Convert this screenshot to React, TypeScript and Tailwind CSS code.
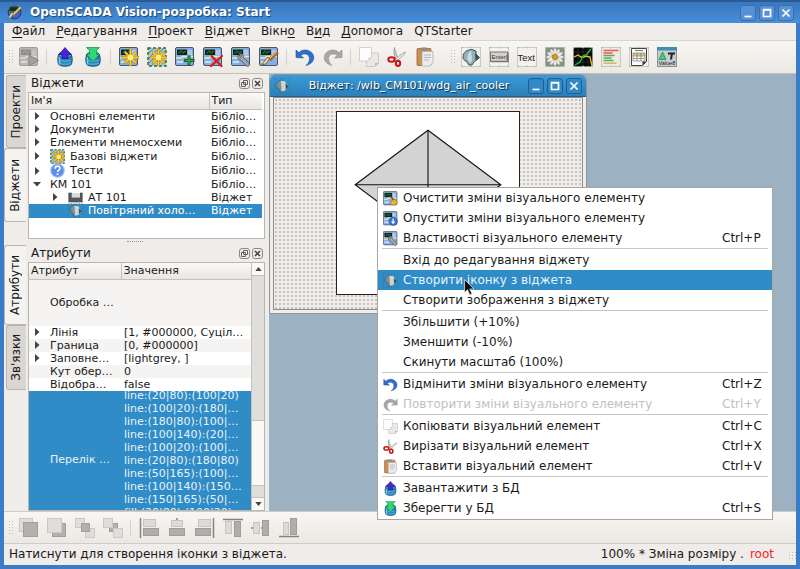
import type { ReactNode } from 'react';
import clsx from 'clsx';

type IconProps = { className?: string };

const Svg = ({ className = 'size-5', children }: { className?: string; children: ReactNode }) => (
  <svg viewBox="0 0 20 20" className={clsx('block shrink-0', className)} aria-hidden="true">
    {children}
  </svg>
);

/* ---------- icon parts ---------- */

// small SCADA screen used as the base of the widget icons
const Screen = ({ gray = false }: { gray?: boolean }) => (
  <g>
    <rect x="0.5" y="0.5" width="18" height="18" rx="1.5" fill={gray ? '#b9b7b5' : '#86aee6'} stroke={gray ? '#a09e9c' : '#4b5666'} />
    <rect x="2" y="2.5" width="10" height="5.5" fill={gray ? '#8f8d8b' : '#10240f'} />
    <path d="M3 6h2V4h2v2h2V4.500h2" fill="none" stroke={gray ? '#a8a6a4' : '#2f8a2f'} strokeWidth="0.8" />
    <path d="M1 11h5l2-1.500h10" fill="none" stroke={gray ? '#dcdad8' : '#e9edb5'} strokeWidth="1.6" />
    <path d="M2 15h6" stroke={gray ? '#dcdad8' : '#c9dcf5'} strokeWidth="2" />
    <path d="M14 3v5M16 3v5" stroke={gray ? '#d0cecc' : '#d5e4f8'} strokeWidth="1" />
  </g>
);

const Star = () => (
  <g>
    <path d="M11.500 3v15M4 10.500h15M6.300 5.300l10.400 10.400M16.700 5.300L6.300 15.700" stroke="#a06c00" strokeWidth="2.6" strokeLinecap="round" />
    <path d="M11.500 3v15M4 10.500h15M6.300 5.300l10.400 10.400M16.700 5.300L6.300 15.700" stroke="#ffc926" strokeWidth="1.9" strokeLinecap="round" />
    <circle cx="11.500" cy="10.500" r="2.800" fill="#fff08a" />
  </g>
);

const DottedFrame = ({ fill = '#f4f2ef' }: { fill?: string }) => (
  <g>
    <rect x="0.5" y="0.5" width="19" height="19" fill={fill} stroke="#a5a29e" strokeDasharray="1 1" />
    <path d="M0 .5h2M18 .5h2M0 19.500h2M18 19.500h2M9 .5h2M9 19.500h2" stroke="#7fe27f" strokeWidth="1.4" />
  </g>
);

const Database = () => (
  <g>
    <path d="M3.500 8C2.500 11 2.500 14 3.500 17c1 3 12 3 13 0 1-3 1-6 0-9z" fill="#2787bd" stroke="#174a72" strokeWidth="0.9" />
    <path d="M4.500 9v8.500" stroke="#7fd4ee" strokeWidth="1.400" />
    <path d="M4 13c1.500 1.600 10.500 1.600 12 0M4 16c1.500 1.600 10.500 1.600 12 0" fill="none" stroke="#5fbfe2" strokeWidth="0.900" />
    <ellipse cx="10" cy="8" rx="6.500" ry="3.200" fill="#4aa5d0" stroke="#174a72" strokeWidth="0.8" />
  </g>
);

/* ---------- icons ---------- */

const RunIcon = (p: IconProps) => (
  <Svg {...p}>
    <Screen gray />
    <path d="M10 8l9.500 5.500L10 19z" fill="#a3a19f" stroke="#8a8886" />
  </Svg>
);

const DbLoadIcon = (p: IconProps) => (
  <Svg {...p}>
    <Database />
    <path d="M10 .5l6 7h-3v4H7v-4H4z" fill="#4a25d8" stroke="#241080" strokeWidth="0.7" />
  </Svg>
);

const DbSaveIcon = (p: IconProps) => (
  <Svg {...p}>
    <Database />
    <path d="M3.500 .5h13l-3 3v4h3L10 14.500l-6.500-7h3v-4z" fill="#2fd873" stroke="#138a45" strokeWidth="0.7" />
  </Svg>
);

const NewWidgetIcon = (p: IconProps) => (
  <Svg {...p}><Screen /><Star /></Svg>
);

const LibraryIcon = (p: IconProps) => (
  <Svg {...p}>
    <rect x="1" y="1" width="18" height="18" fill="#a9c3c9" stroke="#2e6b3a" strokeWidth="1.500" strokeDasharray="3 2" />
    <path d="M2 6l4-4M2 11l9-9M2 16L16 2M5 18L18 5" stroke="#5e7f84" strokeWidth="0.900" />
    <Star />
  </Svg>
);

const AddIcon = (p: IconProps) => (
  <Svg {...p}>
    <Screen />
    <path d="M14 8.500v10M9 13.500h10.500" stroke="#15602a" strokeWidth="3" />
    <path d="M14 9.500v8M10 13.500h8.500" stroke="#2fb352" strokeWidth="1.200" />
  </Svg>
);

const DeleteIcon = (p: IconProps) => (
  <Svg {...p}>
    <Screen />
    <path d="M8.500 9l10 10M19 9L8 19" stroke="#e01818" strokeWidth="2.200" strokeLinecap="round" />
  </Svg>
);

const WrenchIcon = (p: IconProps) => (
  <Svg {...p}>
    <Screen />
    <path d="M8 7.500c-2 1.500-1.500 5 1.500 5.500l6 6c1.500 1.200 4-1 2.800-2.600l-5.800-5.800c.5-3-2-4.600-4-3.800l2 2.200-1 1.500z" fill="#a4a8ae" stroke="#4d5158" strokeWidth="0.900" />
  </Svg>
);

const EditIcon = (p: IconProps) => (
  <Svg {...p}>
    <Screen />
    <path d="M18.500 5l-8 8" stroke="#a36a2f" strokeWidth="3.500" />
    <path d="M18 4l-8 8" stroke="#e2b57d" strokeWidth="1.200" />
    <path d="M11 11l-4 6-4 .5 5-7z" fill="#f0d59c" stroke="#5a4220" strokeWidth="0.700" />
  </Svg>
);

const ClearIcon = (p: IconProps) => (
  <Svg {...p}>
    <Screen />
    <path d="M10 7l5 6" stroke="#7a4a12" strokeWidth="2" />
    <path d="M11 13l5-2 3.500 5-5 3-5-2z" fill="#f0b52d" stroke="#996a10" strokeWidth="0.700" />
  </Svg>
);

const LowerIcon = (p: IconProps) => (
  <Svg {...p}>
    <Screen />
    <circle cx="13.500" cy="13.500" r="5.500" fill="#3b73d8" stroke="#1c3f94" strokeWidth="0.800" />
    <path d="M13.500 10v5.500M11.500 14l2 2.500 2-2.500" fill="none" stroke="#fff" strokeWidth="1.600" />
  </Svg>
);

const undoPath = 'M1 3v7.500l7.500.5-2.600-2.600C9 5.500 14.500 7 14.500 11.500c0 2.500-1 5-3.500 7C17 17 19.500 13 18.500 9 17.300 3.500 9 .5 3.800 5.600z';

const UndoIcon = (p: IconProps) => (
  <Svg {...p}><path d={undoPath} fill="#2e6fd0" stroke="#1f4c98" strokeWidth="0.600" /></Svg>
);

const RedoIcon = (p: IconProps) => (
  <Svg {...p}><g transform="translate(20 0) scale(-1 1)"><path d={undoPath} fill="#a9a7a4" stroke="#8f8d8a" strokeWidth="0.600" /></g></Svg>
);

const CopyIcon = (p: IconProps) => (
  <Svg {...p}>
    <path d="M7.500 6h12v10l-3.500 3.500H7.500z" fill="#e9e9e9" stroke="#c2c0be" strokeWidth="0.800" />
    <path d="M19.500 16l-3.500 3.500V16z" fill="#bcbab8" />
    <path d="M.5 .5h12v10L9.500 14h-9z" fill="#fdfdfd" stroke="#c9c7c5" strokeWidth="0.800" />
    <path d="M12.500 10.500L9.500 14v-3.500z" fill="#cfcdcb" />
  </Svg>
);

const CutIcon = (p: IconProps) => (
  <Svg {...p}>
    <path d="M7.500 .5c1 4 2 8 4 11.500l-2 1C7 9.500 6.300 4 7.500 .5z" fill="#c9cccd" stroke="#7c7f80" strokeWidth="0.600" />
    <path d="M18.500 5c-4 2-7.500 4.500-10 7.500l1.200 1C13.500 11 17 8.500 18.500 5z" fill="#eceeee" stroke="#7c7f80" strokeWidth="0.600" />
    <ellipse cx="4.500" cy="12.500" rx="3.200" ry="2.200" fill="none" stroke="#c81414" strokeWidth="2" />
    <ellipse cx="11" cy="16.300" rx="2.200" ry="2.600" fill="none" stroke="#c81414" strokeWidth="2" />
  </Svg>
);

const PasteIcon = (p: IconProps) => (
  <Svg {...p}>
    <rect x="2" y="1.500" width="14" height="17" rx="1" fill="#c9904e" stroke="#94642c" strokeWidth="0.800" />
    <rect x="5.500" y=".5" width="7" height="3" rx="1" fill="#8c8c8c" />
    <path d="M7 4.500h11v11l-3 3.500H7z" fill="#e9ebec" stroke="#aaa" strokeWidth="0.700" />
    <path d="M9 8h7M9 10.500h7M9 13h5" stroke="#b4b8ba" strokeWidth="1" />
  </Svg>
);

const ElFigureIcon = (p: IconProps) => (
  <Svg {...p}>
    <DottedFrame />
    <path d="M11 2.500C6 2.500 2 5.500 2 10c0 2 1 3.500 3 4l3 4h3l2-3 5.500-4.500L15 7V4z" fill="#8fb0b5" stroke="#3e555c" strokeWidth="1" />
    <path d="M10 3.500C7 6 6 9 6.500 13l3.500 3 1-4z" fill="#c9dde0" />
    <path d="M14 6l4.500 4.500-4 3.500z" fill="#3c5358" />
  </Svg>
);

const CoolerIcon = (p: IconProps) => (
  <Svg {...p}>
    <rect x=".5" y=".5" width="19" height="19" fill="none" stroke="#2d7a7a" strokeDasharray="1.500 2" />
    <path d="M8.500 2.500C4 4 2 7 3 11l2.500 2L8 18l3-1V3z" fill="#74909a" stroke="#34505c" strokeWidth="0.800" />
    <path d="M8.500 3.500l5 .5L18 10.500l-4.500 5.500-4 1z" fill="#ccd6d4" />
    <path d="M14.500 6.500l4 4-4 4z" fill="#3f5054" />
  </Svg>
);

const FormIcon = (p: IconProps) => (
  <Svg {...p}>
    <DottedFrame />
    <rect x="1.500" y="5" width="17" height="9.500" fill="#d4d2cf" stroke="#77756f" />
    <path d="M2 14.500h17V6" stroke="#77756f" strokeWidth="1.500" fill="none" />
    <text x="2.500" y="12" fontSize="6" fontFamily="Liberation Sans, sans-serif" fill="#333">Enter|</text>
  </Svg>
);

const TextIcon = (p: IconProps) => (
  <Svg {...p}>
    <DottedFrame />
    <text x="0.500" y="13.500" fontSize="9.500" fontFamily="Liberation Sans, sans-serif" fill="#222">Text</text>
  </Svg>
);

const MediaIcon = (p: IconProps) => (
  <Svg {...p}>
    <DottedFrame fill="#8a9087" />
    {[0, 30, 60, 90, 120, 150].map((a) => (
      <ellipse key={a} cx="10" cy="10" rx="9" ry="2.200" fill="#ecece9" stroke="#9a9d96" strokeWidth="0.400" transform={`rotate(${a} 10 10)`} />
    ))}
    <circle cx="10" cy="10" r="2.800" fill="#d89c14" stroke="#9c6c05" strokeWidth="0.600" />
  </Svg>
);

const DiagramIcon = (p: IconProps) => (
  <Svg {...p}>
    <DottedFrame fill="#050505" />
    <path d="M1 5h18M1 10h18M1 15h18M5 1v18M10 1v18M15 1v18" stroke="#333" strokeWidth="0.600" />
    <path d="M1 10l4-2 3 2h3l2-1 4 1 2 9" fill="none" stroke="#e2c81c" strokeWidth="1.300" />
    <path d="M2 18l5-3 3-6 4-2 4-5" fill="none" stroke="#28c43c" strokeWidth="1.300" />
  </Svg>
);

const ProtocolIcon = (p: IconProps) => (
  <Svg {...p}>
    <DottedFrame fill="#efe9df" />
    <path d="M2.500 3.500h15M2.500 6h9" stroke="#e55b4f" strokeWidth="1.500" />
    <path d="M2.500 8.500h11M2.500 11h8M2.500 13.500h10" stroke="#4fb060" strokeWidth="1.500" />
    <path d="M2.500 16.200h13" stroke="#cdb765" strokeWidth="1.500" />
  </Svg>
);

const DocumentIcon = (p: IconProps) => (
  <Svg {...p}>
    <DottedFrame />
    <path d="M2.500 1.500h15v13l-4 4h-11z" fill="#fafafa" stroke="#444" />
    <path d="M17.500 14.500l-4 4v-4z" fill="#333" />
    <path d="M6 3.500h8" stroke="#777" strokeWidth="1" />
    <path d="M4 7.500h12" stroke="#e2c55c" strokeWidth="2.500" />
    <path d="M4 6h12v8H4zM4 9h12M4 11.500h12M8 6v8M12 6v8" fill="none" stroke="#777" strokeWidth="0.700" />
  </Svg>
);

const ValueIcon = (p: IconProps) => (
  <Svg {...p}>
    <rect x=".5" y=".5" width="19" height="19" fill="#c6cdd0" stroke="#8a9296" />
    <rect x="0" y="0" width="20" height="3.500" fill="#3f8fb5" />
    <path d="M5.500 5l3.500 7.500H2z" fill="#3fcf7a" stroke="#1c7f45" strokeWidth="0.700" />
    <path d="M11 5.500h7v2h-2.200l-.8 5h-2l.8-5H11z" fill="#222" />
    <text x="1.500" y="18" fontSize="5.500" fontFamily="Liberation Sans, sans-serif" fill="#222">Value8</text>
  </Svg>
);

const HelpIcon = (p: IconProps) => (
  <Svg {...p}>
    <circle cx="10" cy="10" r="9" fill="#5d8ff0" stroke="#a9c2f5" strokeWidth="1.500" />
    <path d="M6.800 7.500c0-4.500 6.500-4.200 6.500-.5 0 2.400-3.200 2.500-3.200 5" fill="none" stroke="#fff" strokeWidth="2.200" />
    <circle cx="10.100" cy="15" r="1.400" fill="#fff" />
  </Svg>
);

const TankIcon = (p: IconProps) => (
  <Svg {...p}>
    <path d="M1 4h4v6h11V4h3v12H1z" fill="#55585c" stroke="#3a3c3f" strokeWidth="0.800" />
    <path d="M5 4h11v6H5z" fill="#d9dbdd" />
  </Svg>
);

const VisionIcon = (p: IconProps) => (
  <Svg {...p}>
    <circle cx="10" cy="10" r="8.500" fill="#4a5fc0" stroke="#2a2f4e" strokeWidth="1.200" />
    <rect x="3" y="2.500" width="13" height="6" fill="#173216" stroke="#6b7a55" strokeWidth="0.700" />
    <path d="M18 3L8 13" stroke="#e6c64f" strokeWidth="2.500" />
    <path d="M9 11l-4 6-4 1 5-8z" fill="#eddfae" stroke="#5a4220" strokeWidth="0.700" />
  </Svg>
);

// layer order icons: [x, y, size, dark]
const layer = (boxes: [number, number, number, boolean][]) => (p: IconProps) => (
  <Svg {...p}>
    {boxes.map(([x, y, s, dark], i) => (
      <rect key={i} x={x} y={y} width={s} height={s} fill={dark ? '#b3b1ae' : '#e0deda'} stroke={dark ? '#a19f9c' : '#cbc9c6'} />
    ))}
  </Svg>
);

const RaiseIcon = layer([[0.5, 0.5, 13, false], [4.5, 4.5, 14, true]]);
const LowerLevelIcon = layer([[5.5, 5.5, 13, true], [0.5, 0.5, 14, false]]);
const UpIcon = layer([[0.5, 0.5, 9, false], [10.5, 10.5, 9, false], [6.5, 5.5, 8, true]]);
const DownIcon = layer([[6.5, 5.5, 8, true], [0.5, 0.5, 9, false], [10.5, 10.5, 9, false]]);

// two bars plus the line they are aligned to
const align = (a: number[], b: number[], line: string, dash = false) => (p: IconProps) => (
  <Svg {...p}>
    <path d={line} stroke="#85837f" strokeWidth="1.500" strokeDasharray={dash ? '2 3' : undefined} />
    <rect x={a[0]} y={a[1]} width={a[2]} height={a[3]} fill="#dddbd7" stroke="#c6c4c1" />
    <rect x={b[0]} y={b[1]} width={b[2]} height={b[3]} fill="#b0aeab" stroke="#9f9d9a" />
  </Svg>
);

const AlignLeftIcon = align([4.5, 1.5, 12, 7], [4.5, 10.5, 15, 7], 'M1.500 0v20');
const AlignCenterIcon = align([4.5, 2.5, 11, 6], [2.5, 10.5, 15, 7], 'M10 0v20', true);
const AlignRightIcon = align([3.5, 1.5, 12, 7], [0.5, 10.5, 15, 7], 'M18.500 0v20');
const AlignTopIcon = align([2.5, 3.5, 6, 12], [11.5, 3.5, 6, 15], 'M0 1.500h20');
const AlignMiddleIcon = align([2.5, 4.5, 6, 11], [11.5, 2.5, 6, 15], 'M0 10h20', true);
const AlignBottomIcon = align([4.5, 4.5, 5, 12], [11.5, 0.5, 6, 16], 'M0 18.500h20');

/* ---------- data ---------- */

const menus = [
  ['', 'Ф', 'айл'],
  ['', 'Р', 'едагування'],
  ['', 'П', 'роект'],
  ['', 'В', 'іджет'],
  ['Вікн', 'о', ''],
  ['В', 'и', 'д'],
  ['', 'Д', 'опомога'],
  ['QTStarter', '', ''],
];

type Tool = { icon: (p: IconProps) => ReactNode; label: string };

const toolGroups: Tool[][] = [
  [{ icon: RunIcon, label: 'Виконати' }],
  [
    { icon: DbLoadIcon, label: 'Завантажити з БД' },
    { icon: DbSaveIcon, label: 'Зберегти у БД' },
  ],
  [
    { icon: NewWidgetIcon, label: 'Новий проект' },
    { icon: LibraryIcon, label: 'Нова бібліотека' },
    { icon: AddIcon, label: 'Додати' },
    { icon: DeleteIcon, label: 'Видалити' },
    { icon: WrenchIcon, label: 'Властивості' },
    { icon: EditIcon, label: 'Редагувати' },
  ],
  [
    { icon: UndoIcon, label: 'Відмінити' },
    { icon: RedoIcon, label: 'Повторити' },
  ],
  [
    { icon: CopyIcon, label: 'Копіювати' },
    { icon: CutIcon, label: 'Вирізати' },
    { icon: PasteIcon, label: 'Вставити' },
  ],
];

const primitiveTools: Tool[] = [
  { icon: ElFigureIcon, label: 'Елементарна фігура' },
  { icon: FormIcon, label: 'Елемент форми' },
  { icon: TextIcon, label: 'Текст' },
  { icon: MediaIcon, label: 'Медіа' },
  { icon: DiagramIcon, label: 'Діаграма' },
  { icon: ProtocolIcon, label: 'Протокол' },
  { icon: DocumentIcon, label: 'Документ' },
  { icon: ValueIcon, label: 'Значення' },
];

const levelTools: Tool[][] = [
  [
    { icon: RaiseIcon, label: 'Підняти наверх' },
    { icon: LowerLevelIcon, label: 'Опустити донизу' },
    { icon: UpIcon, label: 'Підняти' },
    { icon: DownIcon, label: 'Опустити' },
  ],
  [
    { icon: AlignLeftIcon, label: 'Вирівняти ліворуч' },
    { icon: AlignCenterIcon, label: 'Вирівняти по центру' },
    { icon: AlignRightIcon, label: 'Вирівняти праворуч' },
    { icon: AlignTopIcon, label: 'Вирівняти вгору' },
    { icon: AlignMiddleIcon, label: 'Вирівняти посередині' },
    { icon: AlignBottomIcon, label: 'Вирівняти вниз' },
  ],
];

const widgets = [
  { name: 'Основні елементи', type: 'Бібліо…', arrow: 'right', h: 'h-[13px]' },
  { name: 'Документи', type: 'Бібліо…', arrow: 'right', h: 'h-[13px]' },
  { name: 'Елементи мнемосхеми', type: 'Бібліо…', arrow: 'right', h: 'h-[13px]' },
  { name: 'Базові віджети', type: 'Бібліо…', arrow: 'right', h: 'h-[15px]', icon: LibraryIcon },
  { name: 'Тести', type: 'Бібліо…', arrow: 'right', h: 'h-[14px]', icon: HelpIcon },
  { name: 'КМ 101', type: 'Бібліо…', arrow: 'down', h: 'h-[13px]' },
  { name: 'АТ 101', type: 'Віджет', arrow: 'right', h: 'h-[13px]', icon: TankIcon, child: true },
  { name: 'Повітряний холо…', type: 'Віджет', h: 'h-[14px]', icon: CoolerIcon, child: true, selected: true },
];

const attributes = [
  { name: 'Обробка …', value: '', tall: true },
  { name: 'Лінія', value: '[1, #000000, Суціл…', arrow: true },
  { name: 'Граница', value: '[0, #000000]', arrow: true },
  { name: 'Заповне…', value: '[lightgrey, ]', arrow: true },
  { name: 'Кут обер…', value: '0' },
  { name: 'Відобра…', value: 'false' },
];

const figureLines = [
  'line:(20|80):(100|20)',
  'line:(100|20):(180|…',
  'line:(180|80):(100|…',
  'line:(100|140):(20|…',
  'line:(100|20):(100|…',
  'line:(20|80):(180|80)',
  'line:(50|165):(100|…',
  'line:(100|140):(150…',
  'line:(150|165):(50|…',
  'fill:(20|80):(100|20)',
];

type MenuItem = { text: string; keys?: string; icon?: (p: IconProps) => ReactNode; active?: boolean; disabled?: boolean };

const contextMenu: MenuItem[][] = [
  [
    { text: 'Очистити зміни візуального елементу', icon: ClearIcon },
    { text: 'Опустити зміни візуального елементу', icon: LowerIcon },
    { text: 'Властивості візуального елементу', icon: WrenchIcon, keys: 'Ctrl+P' },
  ],
  [
    { text: 'Вхід до редагування віджету' },
    { text: 'Створити іконку з віджета', icon: CoolerIcon, active: true },
    { text: 'Створити зображення з віджету' },
  ],
  [{ text: 'Збільшити (+10%)' }, { text: 'Зменшити (-10%)' }, { text: 'Скинути масштаб (100%)' }],
  [
    { text: 'Відмінити зміни візуального елементу', icon: UndoIcon, keys: 'Ctrl+Z' },
    { text: 'Повторити зміни візуального елементу', icon: RedoIcon, keys: 'Ctrl+Y', disabled: true },
  ],
  [
    { text: 'Копіювати візуальний елемент', icon: CopyIcon, keys: 'Ctrl+C' },
    { text: 'Вирізати візуальний елемент', icon: CutIcon, keys: 'Ctrl+X' },
    { text: 'Вставити візуальний елемент', icon: PasteIcon, keys: 'Ctrl+V' },
  ],
  [
    { text: 'Завантажити з БД', icon: DbLoadIcon },
    { text: 'Зберегти у БД', icon: DbSaveIcon, keys: 'Ctrl+S' },
  ],
];

/* ---------- components ---------- */

const WindowButtons = ({ inner = false }: { inner?: boolean }) => (
  <div className="flex gap-[3px]">
    {[
      { label: 'Згорнути', d: 'M4.500 11.500h7' },
      { label: 'Розгорнути', d: 'M4.500 4.500h7v7h-7zM4.500 5h7' },
      { label: 'Закрити', d: 'M4.500 4.500l7 7M11.500 4.500l-7 7' },
    ].map((b) => (
      <button
        key={b.label}
        aria-label={b.label}
        className={clsx('size-4 rounded-[3px] border', inner ? 'border-[#1c5f92] bg-[#3388c6]' : 'border-[#386fae] bg-[#5591d3]')}
      >
        <svg viewBox="1 1 14 14" className="block size-full" aria-hidden="true">
          <path d={b.d} fill="none" stroke="#fff" strokeWidth="1.700" />
        </svg>
      </button>
    ))}
  </div>
);

const ToolButton = ({ icon: Icon, label }: Tool) => (
  <button aria-label={label} className="flex h-7 w-7 items-center justify-center">
    <Icon />
  </button>
);

const Handle = () => (
  <div className="ml-1 mr-px h-4 w-[6px] bg-[radial-gradient(circle,#c3c0bc_1px,transparent_1px)] bg-[length:3px_3px]" />
);

const Separator = () => <div className="ml-[3px] mr-1 h-4 w-px bg-[#d5d2ce]" />;

const Arrow = ({ down = false }: { down?: boolean }) => (
  <svg viewBox="0 0 8 8" className="block size-2 shrink-0" aria-hidden="true">
    <path d={down ? 'M0 2h8L4 6.500z' : 'M2 0v8l4.500-4z'} fill="#444" />
  </svg>
);

const DockTitle = ({ title }: { title: string }) => (
  <div className="flex h-[18px] items-center justify-between pl-[3px] pr-0.5">
    <h2 className="text-[12px]">{title}</h2>
    <div className="flex gap-0.5">
      <button aria-label="Відкріпити" className="size-[11px] rounded-[3px] border border-[#8d8a86]">
        <svg viewBox="0 0 9 9" className="block size-full" aria-hidden="true">
          <path d="M3.500 1.500h4v4h-4zM1.500 3.500h4v4h-4z" fill="none" stroke="#555" strokeWidth="0.900" />
        </svg>
      </button>
      <button aria-label="Закрити" className="size-[11px] rounded-[3px] border border-[#8d8a86]">
        <svg viewBox="0 0 9 9" className="block size-full" aria-hidden="true">
          <path d="M2 2l5 5M7 2L2 7" stroke="#444" strokeWidth="1.600" />
        </svg>
      </button>
    </div>
  </div>
);

const SideTab = ({ label, active = false, h }: { label: string; active?: boolean; h: string }) => (
  <button
    role="tab"
    aria-selected={active}
    className={clsx(
      'flex items-center justify-center rounded-l-[3px] border border-r-0 border-[#bab7b3]',
      h,
      active ? 'w-[22px] bg-[#f5f3f0]' : 'ml-0.5 w-5 bg-[#dad7d3]',
    )}
  >
    <span className="rotate-180 [writing-mode:vertical-rl]">{label}</span>
  </button>
);

const headCell = 'h-4 border-b border-[#c4c1bd] bg-linear-to-b from-[#faf9f8] to-[#e9e6e2] text-left font-normal';

const WidgetTree = () => (
  <div className="flex-1 border border-[#b9b6b2] bg-white pr-0.5">
    <table className="w-full table-fixed border-collapse text-[11px]">
      <thead>
        <tr>
          <th className={clsx(headCell, 'border-r pl-0.5')}>Ім'я</th>
          <th className={clsx(headCell, 'w-[53px] pl-0.5')}>Тип</th>
        </tr>
      </thead>
      <tbody>
        {widgets.map((w) => (
          <tr key={w.name} className={clsx(w.selected && 'bg-[#308cc6] text-white')}>
            <td className="p-0">
              <div className={clsx('flex items-center whitespace-nowrap', w.h, w.child ? 'pl-[22px]' : 'pl-1')}>
                <span className="flex w-[17px] shrink-0">{w.arrow && <Arrow down={w.arrow === 'down'} />}</span>
                {w.icon && <span className="mr-[5px]"><w.icon className="size-[15px]" /></span>}
                {w.name}
              </div>
            </td>
            <td className="whitespace-nowrap p-0 pl-0.5">{w.type}</td>
          </tr>
        ))}
      </tbody>
    </table>
  </div>
);

const AttributeTable = () => (
  <div className="flex h-[249px] overflow-hidden border border-[#b9b6b2]">
    <div className="min-w-0 flex-1 overflow-hidden bg-white">
      <table className="w-full table-fixed border-collapse text-[11px]">
        <thead>
          <tr>
            <th className={clsx(headCell, 'w-[92px] border-r pl-0.5')}>Атрибут</th>
            <th className={clsx(headCell, 'pl-0.5')}>Значення</th>
          </tr>
        </thead>
        <tbody>
          {attributes.map((a) => (
            <tr key={a.name} className="odd:bg-[#f5f4f2]">
              <td className="p-0">
                <div className={clsx('flex items-center whitespace-nowrap pl-1', a.tall ? 'h-[46px]' : 'h-[13px]')}>
                  <span className="flex w-[17px] shrink-0">{a.arrow && <Arrow />}</span>
                  {a.name}
                </div>
              </td>
              <td className="whitespace-nowrap p-0 pl-[3px]">{a.value}</td>
            </tr>
          ))}
          <tr className="bg-[#308cc6] text-[#e8f3fa]">
            <td className="p-0 pl-[21px]">Перелік …</td>
            <td className="p-0 pl-[3px]">
              <div className="flex h-[138px] flex-col justify-center overflow-hidden pb-3">
                {figureLines.map((l) => (
                  <div key={l} className="h-[13px] shrink-0 whitespace-nowrap">{l}</div>
                ))}
              </div>
            </td>
          </tr>
        </tbody>
      </table>
    </div>
    <div className="flex w-[13px] flex-col border-l border-[#c4c1bd] bg-[#e0deda]">
      <button aria-label="Вгору" className="flex h-[13px] items-center justify-center border-b border-[#c4c1bd] bg-[#faf9f8]">
        <svg viewBox="0 0 8 5" className="h-1 w-[7px]" aria-hidden="true"><path d="M0 5h8L4 0z" fill="#444" /></svg>
      </button>
      <div className="flex-1" />
      <div className="h-[66px] border-y border-[#c4c1bd] bg-[#faf9f8]" />
      <div className="h-[11px]" />
      <button aria-label="Вниз" className="flex h-[13px] items-center justify-center border-t border-[#c4c1bd] bg-[#faf9f8]">
        <svg viewBox="0 0 8 5" className="h-1 w-[7px]" aria-hidden="true"><path d="M0 0h8L4 5z" fill="#444" /></svg>
      </button>
    </div>
  </div>
);

const WidgetWindow = () => (
  <section className="absolute left-0 top-0 w-[318px] rounded-t-md border border-[#8e9399] bg-[#efecea]">
    <div className="flex h-[22px] items-center justify-between rounded-t-[5px] border-b border-[#1f618f] bg-linear-to-b from-[#3a9ad8] to-[#2b80b9] px-1">
      <CoolerIcon className="size-4" />
      <h1 className="text-[11px] text-white [text-shadow:1px_1px_1px_#123]">Віджет: /wlb_CM101/wdg_air_cooler</h1>
      <WindowButtons inner />
    </div>
    <div className="mx-[3px] mb-[3px] h-[213px] border border-[#8f8c88] bg-[#efecea] bg-[radial-gradient(circle,#c6c2bd_1px,transparent_1px)] bg-[length:4px_4px] pl-[62px] pt-[13px]">
      <svg viewBox="0 0 200 200" className="block size-[184px] border border-[#222] bg-white" aria-hidden="true">
        <g fill="lightgrey" stroke="#111" strokeWidth="1.200">
          <path d="M20 80L100 20L180 80L100 140z" />
          <path d="M100 20V140M20 80H180" />
          <path d="M50 165L100 140L150 165z" />
        </g>
      </svg>
    </div>
  </section>
);

const ContextMenu = () => (
  <div role="menu" className="absolute left-[373px] top-[187px] w-[396px] border border-[#a9a6a2] bg-white pb-px">
    {contextMenu.map((group, i) => (
      <div key={i}>
        {i > 0 && <div className="mx-1 mb-px h-px bg-[#c9c7c5]" />}
        {group.map((item) => (
          <button
            key={item.text}
            role="menuitem"
            disabled={item.disabled}
            className={clsx(
              'flex h-5 w-full items-center pl-[5px] pr-3 text-[12px]',
              item.active && 'bg-[#308cc6] text-[#e8f3fa]',
              item.disabled && 'text-[#c3c1bf]',
            )}
          >
            <span className="w-5 shrink-0">{item.icon && <item.icon className="size-[15px]" />}</span>
            <span className="flex-1 text-left whitespace-nowrap">{item.text}</span>
            {item.keys && <span className="w-[38px] whitespace-nowrap text-left">{item.keys}</span>}
          </button>
        ))}
      </div>
    ))}
  </div>
);

export default function App() {
  return (
    <div className="relative flex min-h-screen flex-col border-x-4 border-b-4 border-[#3a7cc8] bg-[#efecea] font-['DejaVu_Sans',sans-serif] text-[12px] leading-[13px] text-[#1a1a1a]">
      <header className="-mx-1 flex h-[23px] items-center border-t-2 border-[#2c5a92] bg-linear-to-b from-[#3877bd] to-[#468fdb] pl-[7px] pr-[6px]">
        <VisionIcon className="size-[15px]" />
        <h1 className="ml-2 flex-1 text-[12px] font-bold text-white [text-shadow:1px_1px_1px_#1c4373]">OpenSCADA Vision-розробка: Start</h1>
        <WindowButtons />
      </header>

      <nav className="flex h-[18px] items-center gap-[11px] border-b border-[#d8d5d1] pl-2">
        {menus.map(([before, key, after]) => (
          <button key={before + key + after} className="text-[12px]">
            {before}<span className="underline underline-offset-2">{key}</span>{after}
          </button>
        ))}
      </nav>

      <div className="flex h-[33px] items-center border-b border-[#c4c1bd] bg-linear-to-b from-[#f8f6f3] to-[#ece8e3]">
        <Handle />
        {toolGroups.map((group, i) => (
          <div key={i} className="flex items-center">
            {i > 0 && <Separator />}
            {group.map((t) => <ToolButton key={t.label} {...t} />)}
          </div>
        ))}
        <div className="flex items-center pl-[7px]">
          <Handle />
          {primitiveTools.map((t) => <ToolButton key={t.label} {...t} />)}
        </div>
      </div>

      <main className="flex flex-1">
        <aside className="flex w-[265px] shrink-0 flex-col pr-1">
          <div className="flex flex-1">
            <div role="tablist" className="flex w-[23px] shrink-0 flex-col pt-px">
              <SideTab label="Проекти" h="h-[73px]" />
              <SideTab label="Віджети" active h="h-[74px]" />
            </div>
            <div className="flex min-w-0 flex-1 flex-col pl-px">
              <DockTitle title="Віджети" />
              <WidgetTree />
            </div>
          </div>
          <div className="flex h-[5px] items-center justify-center">
            <div className="h-px w-4 border-t border-dotted border-[#9b9894]" />
          </div>
          <div className="flex">
            <div role="tablist" className="flex w-[23px] shrink-0 flex-col pt-px">
              <SideTab label="Атрибути" active h="h-[80px]" />
              <SideTab label="Зв'язки" h="h-[65px]" />
            </div>
            <div className="flex min-w-0 flex-1 flex-col pl-px">
              <DockTitle title="Атрибути" />
              <AttributeTable />
            </div>
          </div>
        </aside>
        <div className="relative flex-1 bg-[#9cb2c2]">
          <WidgetWindow />
        </div>
      </main>

      <div className="flex h-[33px] items-center border-y border-[#cfccc8] bg-linear-to-b from-[#f8f6f3] to-[#ece8e3]">
        <Handle />
        {levelTools.map((group, i) => (
          <div key={i} className="flex items-center">
            {i > 0 && <Separator />}
            {group.map((t) => <ToolButton key={t.label} {...t} />)}
          </div>
        ))}
      </div>

      <footer className="flex h-[21px] items-center justify-between pl-[5px]">
        <span>Натиснути для створення іконки з віджета.</span>
        <div className="flex items-center">
          <span>100% * Зміна розміру .</span>
          <span className="ml-1.5 text-[#ff2020]">root</span>
          <div className="ml-[14px] size-2 bg-[radial-gradient(circle,#c3c0bc_1px,transparent_1px)] bg-[length:3px_3px]" />
        </div>
      </footer>

      <ContextMenu />

      <svg viewBox="0 0 11 17" className="absolute left-[460px] top-[279px] h-[17px] w-[11px]" aria-hidden="true">
        <path d="M.5.5v13l3-2.800 2.300 5.300 2.200-1-2.300-5H10z" fill="#111" stroke="#eee" strokeWidth="0.700" />
      </svg>
    </div>
  );
}
